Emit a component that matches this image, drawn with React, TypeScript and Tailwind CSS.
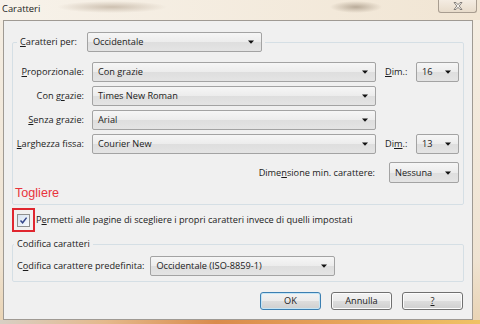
const ui = "font-['Open_Sans',sans-serif] text-[9.2px] text-[#1b1b1b]";

function Arrow() {
  return (
    <svg width="6" height="4" viewBox="0 0 6 4" className="shrink-0">
      <path d="M0 0.5h6L3 3.8z" fill="#111" />
    </svg>
  );
}

function Combo({ value, className }: { value: string; className: string }) {
  return (
    <div
      className={`flex h-[20px] items-center justify-between rounded-[2px] border border-[#a3a3a3] bg-[linear-gradient(180deg,#f6f6f6_0%,#ececec_50%,#dedede_51%,#e4e4e4_100%)] pl-[5px] pr-[7px] ${className}`}
    >
      <span className="whitespace-nowrap leading-[14px]">{value}</span>
      <Arrow />
    </div>
  );
}

function Btn({ children, primary }: { children: React.ReactNode; primary?: boolean }) {
  return (
    <div
      className={`flex h-[18px] w-[61px] items-center justify-center rounded-[3px] border bg-[linear-gradient(180deg,#f3f3f3_0%,#ebebeb_50%,#dddddd_51%,#cfcfcf_100%)] leading-[14px] ${
        primary
          ? "border-[#3c7fb1] shadow-[inset_0_0_0_1px_#c4e5f6]"
          : "border-[#707070] shadow-[inset_0_0_0_1px_#fcfcfc]"
      }`}
    >
      {children}
    </div>
  );
}

const fontRows = [
  { label: <><u>P</u>roporzionale:</>, value: "Con grazie", dim: { label: <><u>D</u>im.:</>, value: "16" } },
  { label: <>Con g<u>r</u>azie:</>, value: "Times New Roman" },
  { label: <><u>S</u>enza grazie:</>, value: "Arial" },
  { label: <><u>L</u>arghezza fissa:</>, value: "Courier New", dim: { label: <>Di<u>m</u>.:</>, value: "13" } },
];

export default function App() {
  return (
    <div className={`${ui} flex h-[324px] w-[480px] flex-col overflow-hidden bg-[linear-gradient(180deg,#f5eee3_0%,#efe3d2_80%,#e9d3b3_100%)]`}>
      {/* title bar */}
      <div className="flex h-[20px] shrink-0 items-start justify-between bg-[radial-gradient(ellipse_55px_6px_at_112px_7px,#cdc0b0,transparent),radial-gradient(ellipse_26px_6px_at_356px_7px,#b9ab99,transparent),linear-gradient(90deg,#f7f2ea,#f1e5d3)]">
        <span className="pl-[2px] pt-[3px] text-[9.4px] leading-[12px] text-[#222]">Caratteri</span>
        <div className="mr-[3px] flex h-[13px] w-[39px] items-center justify-center rounded-b-[3px] border border-t-0 border-[#a89d90] bg-[linear-gradient(180deg,#f4ece2,#e8dccb)]">
          <svg width="10" height="8" viewBox="0 0 10 8">
            <path d="M1 0.5h2l2 2.2 2-2.2h2L6.2 4 9 7.5H7L5 5.3 3 7.5H1L3.8 4z" fill="#f6f3ee" stroke="#6e6a66" strokeWidth="0.8" />
          </svg>
        </div>
      </div>

      {/* dialog body */}
      <div className="ml-[3px] flex h-[300px] w-[470px] shrink-0 flex-col border border-[#9f9a93] bg-[#f0f0f0]">
        <fieldset className="mx-[8px] mt-[11px] rounded-[2px] border border-[#d5dfe5] pb-[2px]">
          <legend className="ml-[4px] px-[3px]">
            <div className="flex items-center gap-[10px]">
              <span><u>C</u>aratteri per:</span>
              <Combo value="Occidentale" className="w-[175px]" />
            </div>
          </legend>
          <div className="mt-[10px] flex flex-col gap-[4px]">
            {fontRows.map((r, i) => (
              <div key={i} className="flex h-[20px] items-center">
                <span className="w-[71px] text-right">{r.label}</span>
                <Combo value={r.value} className="ml-[8px] w-[284px]" />
                {r.dim && (
                  <>
                    <span className="ml-[9px] w-[31px]">{r.dim.label}</span>
                    <Combo value={r.dim.value} className="w-[43px]" />
                  </>
                )}
              </div>
            ))}
          </div>
          <div className="mt-[8px] flex h-[21px] items-center justify-end gap-[14px] pr-[4px]">
            <span>Dime<u>n</u>sione min. carattere:</span>
            <Combo value="Nessuna" className="h-[21px] w-[70px]" />
          </div>
          <div className="mt-[2px] pl-[2px] font-['Liberation_Sans',sans-serif] text-[12.6px] leading-[17px] text-[#e8343c]">Togliere</div>
        </fieldset>

        <div className="ml-[8px] mt-[3px] flex items-center">
          <div className="flex h-[24px] w-[23px] items-center justify-center border-2 border-[#e0262f]">
            <div className="flex h-[13px] w-[13px] items-center justify-center border border-[#8e8f8f] bg-[linear-gradient(135deg,#d6e2f1,#f7fafd)]">
              <svg width="9" height="9" viewBox="0 0 9 9">
                <path d="M1.5 4.6L3.6 6.8 7.6 1.6" fill="none" stroke="#34468a" strokeWidth="1.5" />
              </svg>
            </div>
          </div>
          <span className="ml-[1px]">P<u>e</u>rmetti alle pagine di scegliere i propri caratteri invece di quelli impostati</span>
        </div>

        <fieldset className="mx-[8px] mt-[5px] rounded-[2px] border border-[#d5dfe5] pb-[5px]">
          <legend className="ml-[1px] px-[3px] leading-[14px]">Codifica caratteri</legend>
          <div className="mt-[5px] flex h-[20px] items-center gap-[6px] pl-[4px]">
            <span>C<u>o</u>difica carattere predefinita:</span>
            <Combo value="Occidentale (ISO-8859-1)" className="w-[185px]" />
          </div>
        </fieldset>

        <div className="mr-[9px] mt-[10px] flex justify-end gap-[10px]">
          <Btn primary>OK</Btn>
          <Btn>Annulla</Btn>
          <Btn>
            <u>?</u>
          </Btn>
        </div>
      </div>

      <div className="h-[4px] w-full bg-[linear-gradient(90deg,#d8cfc4_0%,#e4b98c_22%,#d98b4c_45%,#e5a159_68%,#efc265_100%)]" />
    </div>
  );
}
